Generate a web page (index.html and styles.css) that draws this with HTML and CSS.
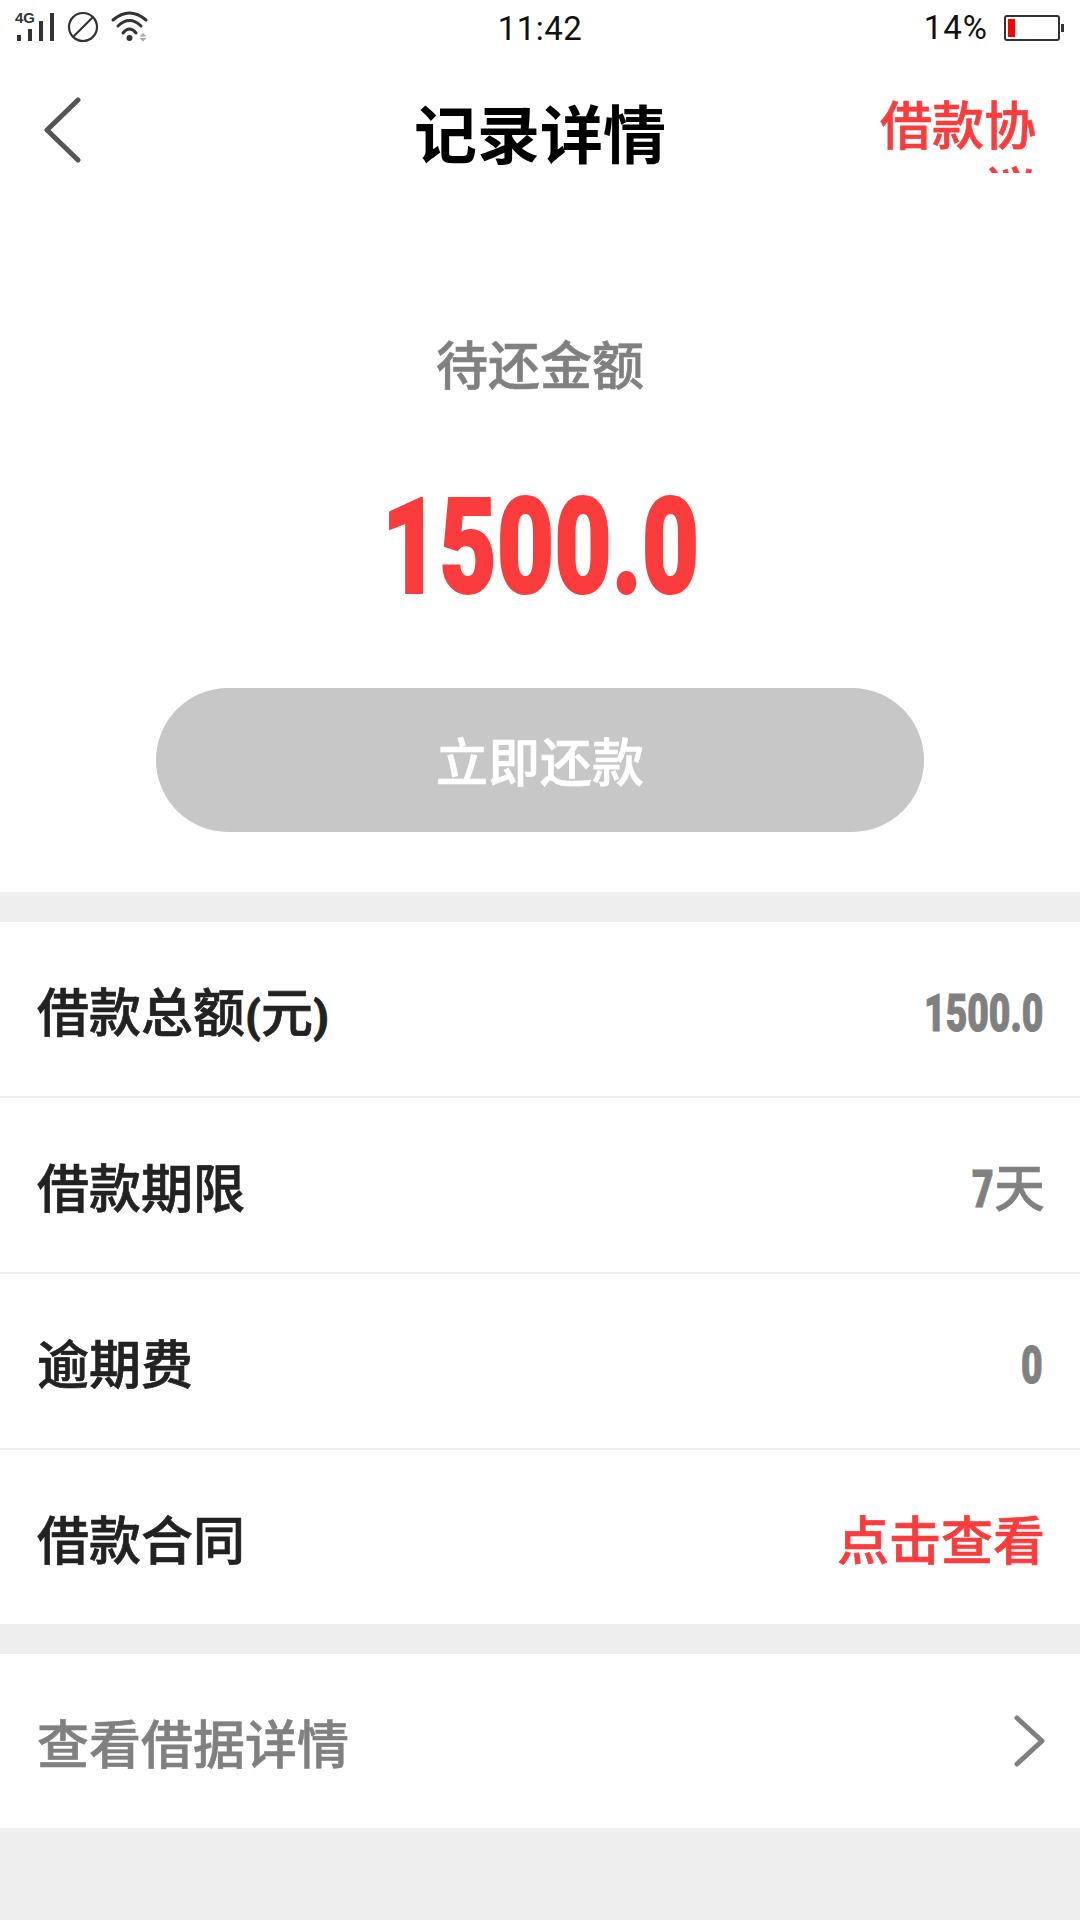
FILE: index.html
```html
<!DOCTYPE html>
<html lang="zh-CN">
<head>
    <meta charset="UTF-8">
    <meta name="viewport" content="width=device-width, initial-scale=1.0">
    <title>记录详情</title>
    <link rel="stylesheet" href="styles.css">
</head>
<body>
    <div class="status-bar">
        <div class="status-left">
            <svg width="150" height="55" viewBox="0 0 150 55">
                <text x="15" y="23" class="signal-label">4G</text>
                <g fill="#333">
                    <rect x="17" y="35" width="4" height="6"/>
                    <rect x="28" y="29" width="4" height="12"/>
                    <rect x="39" y="21" width="4" height="20"/>
                    <rect x="50" y="13" width="4" height="28"/>
                </g>
                <g fill="none" stroke="#333" stroke-width="2.2">
                    <circle cx="83" cy="27" r="14"/>
                    <path d="M73 37 L93 17"/>
                </g>
                <g fill="none" stroke="#333" stroke-width="3" stroke-linecap="round">
                    <path d="M113 20 Q129.5 6 146 20"/>
                    <path d="M118 26 Q129.5 15 141 26"/>
                    <path d="M123 33 Q129.5 25 136 33"/>
                </g>
                <circle cx="129.5" cy="38" r="3" fill="#333"/>
                <path d="M143 33 L146.5 36.5 H139.5 Z M139.5 38 H146.5 L143 41.5 Z" fill="#aaa"/>
            </svg>
        </div>
        <div class="status-time">11:42</div>
        <div class="status-right">
            <span class="battery-text">14%</span>
            <span class="battery"><span class="battery-level"></span></span>
            <span class="battery-tip"></span>
        </div>
    </div>

    <div class="header">
        <svg class="back" width="40" height="66" viewBox="0 0 40 66">
            <path d="M36 3 L5 33 L36 63" fill="none" stroke="#555" stroke-width="5" stroke-linecap="round" stroke-linejoin="round"/>
        </svg>
        <div class="title">记录详情</div>
        <div class="agreement">借款协议</div>
    </div>

    <div class="hero">
        <div class="hero-label">待还金额</div>
        <div class="hero-amount"><span>1500.0</span></div>
        <div class="repay-btn">立即还款</div>
    </div>

    <div class="section">
        <div class="row">
            <span class="row-label">借款总额<span class="paren">(</span>元<span class="paren">)</span></span>
            <span class="row-value"><span class="num">1500.0</span></span>
        </div>
        <div class="row">
            <span class="row-label">借款期限</span>
            <span class="row-value cjk-end"><span class="num">7</span>天</span>
        </div>
        <div class="row">
            <span class="row-label">逾期费</span>
            <span class="row-value"><span class="num">0</span></span>
        </div>
        <div class="row">
            <span class="row-label">借款合同</span>
            <span class="row-value cjk-end link">点击查看</span>
        </div>
    </div>

    <div class="section">
        <div class="row row-more">
            <span class="row-label muted">查看借据详情</span>
            <svg width="32" height="52" viewBox="0 0 32 52">
                <path d="M3 3 L28 26 L3 49" fill="none" stroke="#808080" stroke-width="5" stroke-linecap="round" stroke-linejoin="round"/>
            </svg>
        </div>
    </div>
</body>
</html>
```

FILE: styles.css
```css
html, body {
    margin: 0;
    padding: 0;
}
body {
    width: 1080px;
    height: 1920px;
    overflow: hidden;
    background: #eeeeee;
    font-family: "Noto Sans CJK SC", "Liberation Sans", sans-serif;
}
.status-bar {
    height: 55px;
    background: #fff;
    display: grid;
    grid-template-columns: 1fr auto 1fr;
    align-items: center;
    color: #111;
}
.status-left {
    display: flex;
    align-items: center;
}
.signal-label {
    font-family: "Liberation Sans", sans-serif;
    font-size: 15px;
    font-weight: 700;
    fill: #333;
}
.status-time {
    font-family: Roboto, sans-serif;
    font-size: 33px;
    font-weight: 400;
    letter-spacing: 0.5px;
    padding-top: 2px;
}
.status-right {
    display: flex;
    align-items: center;
    justify-content: flex-end;
    padding-right: 16px;
}
.battery-text {
    font-family: Roboto, sans-serif;
    font-size: 33px;
    font-weight: 400;
    letter-spacing: 1px;
    margin-right: 16px;
}
.battery {
    width: 56px;
    height: 26px;
    box-sizing: border-box;
    border: 2px solid #333;
    border-radius: 3px;
    padding: 2px;
    display: block;
}
.battery-level {
    display: block;
    width: 7px;
    height: 100%;
    background: #ff0000;
}
.battery-tip {
    width: 3px;
    height: 8px;
    background: #333;
    margin-left: 1px;
}
.header {
    height: 120px;
    background: #fff;
    position: relative;
    display: flex;
    justify-content: center;
}
.back {
    position: absolute;
    left: 42px;
    top: 42px;
}
.title {
    font-size: 63px;
    font-weight: 700;
    line-height: 70px;
    margin-top: 41px;
    color: #000;
}
.agreement {
    position: absolute;
    right: 44px;
    top: 35px;
    width: 156px;
    height: 83px;
    overflow: hidden;
    font-size: 52px;
    font-weight: 500;
    -webkit-text-stroke: 0.6px #fb3c3c;
    line-height: 65px;
    color: #fb3c3c;
    text-align: right;
}
.hero {
    background: #fff;
    height: 717px;
    box-sizing: border-box;
    padding-top: 152px;
    display: flex;
    flex-direction: column;
    align-items: center;
}
.hero-label {
    font-size: 52px;
    font-weight: 500;
    -webkit-text-stroke: 0.6px #808080;
    line-height: 72px;
    color: #808080;
}
.hero-amount {
    height: 140px;
    margin-top: 79px;
    line-height: 140px;
}
.hero-amount span {
    display: inline-block;
    font-family: Roboto, sans-serif;
    font-size: 134px;
    font-weight: 900;
    color: #fb3c3c;
    -webkit-text-stroke: 2px #fb3c3c;
    transform: scaleX(0.74);
}
.repay-btn {
    width: 768px;
    height: 144px;
    margin-top: 70px;
    border-radius: 72px;
    background: #c7c7c7;
    color: #fff;
    font-size: 52px;
    font-weight: 500;
    -webkit-text-stroke: 0.6px #fff;
    line-height: 144px;
    text-align: center;
}
.section {
    margin-top: 30px;
    background: #fff;
}
.row {
    height: 176px;
    box-sizing: border-box;
    border-bottom: 2px solid #eeeeee;
    padding: 0 37px;
    display: flex;
    align-items: center;
    justify-content: space-between;
}
.row:last-child {
    border-bottom: none;
    height: 174px;
}
.row-label {
    font-size: 52px;
    font-weight: 500;
    -webkit-text-stroke: 0.7px #222;
    color: #222;
}
.paren {
    display: inline-block;
    width: 16px;
    font-family: Roboto, sans-serif;
    font-size: 44px;
    font-weight: 900;
    text-align: center;
}
.row-value {
    font-size: 51px;
    font-weight: 500;
    -webkit-text-stroke: 0.4px #808080;
    color: #808080;
}
.cjk-end {
    margin-right: -2px;
}
.num {
    display: inline-block;
    font-family: Roboto, sans-serif;
    font-weight: 900;
    -webkit-text-stroke: 1px #808080;
    transform: scaleX(0.73);
    transform-origin: right center;
}
.link {
    color: #fb3c3c;
    -webkit-text-stroke: 0.7px #fb3c3c;
    font-size: 52px;
}
.muted {
    color: #808080;
    -webkit-text-stroke: 0.6px #808080;
}
.row-more {
    padding-right: 34px;
}
```
